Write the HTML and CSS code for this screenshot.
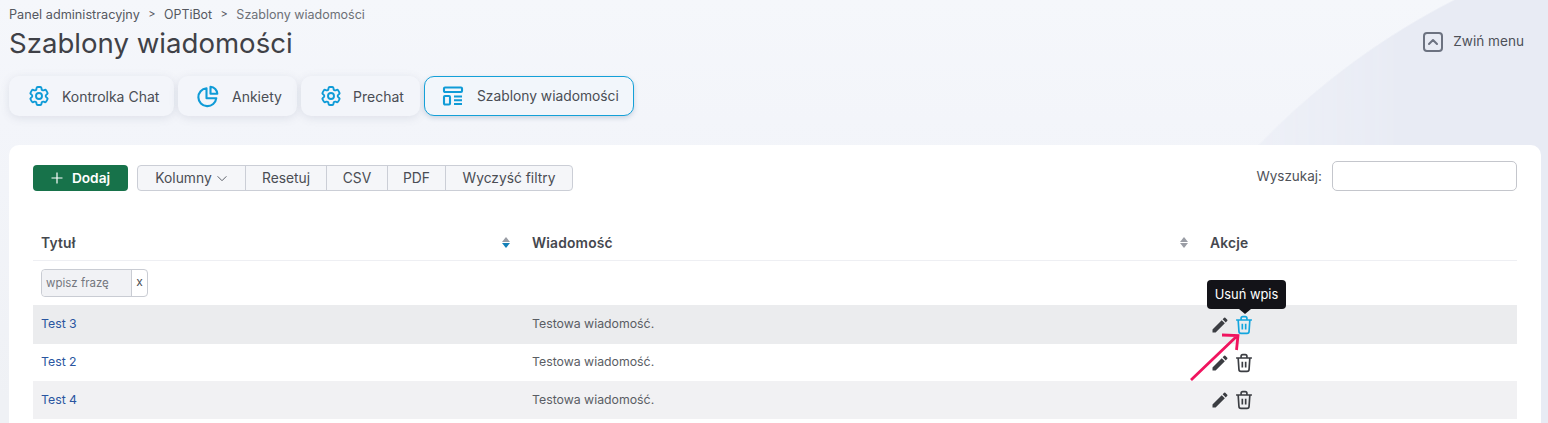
FILE: index.html
```html
<!DOCTYPE html>
<html lang="pl">
<head>
<meta charset="utf-8">
<title>Szablony wiadomości</title>
<link rel="stylesheet" href="styles.css">
</head>
<body>
<header class="head">
  <div class="head-left">
    <nav class="crumbs"><span>Panel administracyjny</span><span class="sep">&gt;</span><span class="crumb-mid">OPTiBot</span><span class="sep">&gt;</span><span>Szablony wiadomości</span></nav>
    <h1 class="title">Szablony wiadomości</h1>
  </div>
  <div class="collapse">
    <svg class="collapse-ic" viewBox="0 0 20 20" width="20" height="20"><rect x="1" y="1" width="18" height="18" rx="3" fill="none" stroke="#6c7280" stroke-width="2"/><path d="M6 12l4-4 4 4" fill="none" stroke="#6c7280" stroke-width="2" stroke-linecap="round" stroke-linejoin="round"/></svg>
    <span>Zwiń menu</span>
  </div>
</header>
<div class="tabs">
  <a class="tab tab-1"><svg class="tab-ic" viewBox="0 0 24 24" width="24" height="24"><path d="M9.594 3.94c.09-.542.56-.94 1.11-.94h2.593c.55 0 1.02.398 1.11.94l.213 1.281c.063.374.313.686.645.87.074.04.147.083.22.127.325.196.72.257 1.075.124l1.217-.456a1.125 1.125 0 0 1 1.37.49l1.296 2.247a1.125 1.125 0 0 1-.26 1.431l-1.003.827c-.293.241-.438.613-.43.992a7.723 7.723 0 0 1 0 .255c-.008.378.137.75.43.991l1.004.827c.424.35.534.955.26 1.43l-1.298 2.247a1.125 1.125 0 0 1-1.369.491l-1.217-.456c-.355-.133-.75-.072-1.076.124a6.47 6.47 0 0 1-.22.128c-.331.183-.581.495-.644.869l-.213 1.281c-.09.543-.56.94-1.11.94h-2.594c-.55 0-1.019-.398-1.11-.94l-.213-1.281c-.062-.374-.312-.686-.644-.87a6.52 6.52 0 0 1-.22-.127c-.325-.196-.72-.257-1.076-.124l-1.217.456a1.125 1.125 0 0 1-1.369-.49l-1.297-2.247a1.125 1.125 0 0 1 .26-1.431l1.004-.827c.292-.24.437-.613.43-.991a6.932 6.932 0 0 1 0-.255c.007-.38-.138-.751-.43-.992l-1.004-.827a1.125 1.125 0 0 1-.26-1.43l1.297-2.247a1.125 1.125 0 0 1 1.37-.491l1.216.456c.356.133.751.072 1.076-.124.072-.044.146-.086.22-.128.332-.183.582-.495.644-.869l.214-1.28Z" fill="none" stroke="#0f9bd7" stroke-width="1.9" stroke-linejoin="round"/><circle cx="12" cy="12" r="3" fill="none" stroke="#0f9bd7" stroke-width="1.9"/></svg><span>Kontrolka Chat</span></a>
  <a class="tab tab-2"><svg class="tab-ic" viewBox="0 0 24 24" width="24" height="24"><path d="M10.5 4.2a9 9 0 1 0 9.8 10h-9.8z" fill="none" stroke="#0f9bd7" stroke-width="2.1" stroke-linejoin="round"/><path d="M14.5 2.8a7.2 7.2 0 0 1 6.8 7h-6.8z" fill="none" stroke="#0f9bd7" stroke-width="2.1" stroke-linejoin="round"/></svg><span>Ankiety</span></a>
  <a class="tab tab-3"><svg class="tab-ic" viewBox="0 0 24 24" width="24" height="24"><path d="M9.594 3.94c.09-.542.56-.94 1.11-.94h2.593c.55 0 1.02.398 1.11.94l.213 1.281c.063.374.313.686.645.87.074.04.147.083.22.127.325.196.72.257 1.075.124l1.217-.456a1.125 1.125 0 0 1 1.37.49l1.296 2.247a1.125 1.125 0 0 1-.26 1.431l-1.003.827c-.293.241-.438.613-.43.992a7.723 7.723 0 0 1 0 .255c-.008.378.137.75.43.991l1.004.827c.424.35.534.955.26 1.43l-1.298 2.247a1.125 1.125 0 0 1-1.369.491l-1.217-.456c-.355-.133-.75-.072-1.076.124a6.47 6.47 0 0 1-.22.128c-.331.183-.581.495-.644.869l-.213 1.281c-.09.543-.56.94-1.11.94h-2.594c-.55 0-1.019-.398-1.11-.94l-.213-1.281c-.062-.374-.312-.686-.644-.87a6.52 6.52 0 0 1-.22-.127c-.325-.196-.72-.257-1.076-.124l-1.217.456a1.125 1.125 0 0 1-1.369-.49l-1.297-2.247a1.125 1.125 0 0 1 .26-1.431l1.004-.827c.292-.24.437-.613.43-.991a6.932 6.932 0 0 1 0-.255c.007-.38-.138-.751-.43-.992l-1.004-.827a1.125 1.125 0 0 1-.26-1.43l1.297-2.247a1.125 1.125 0 0 1 1.37-.491l1.216.456c.356.133.751.072 1.076-.124.072-.044.146-.086.22-.128.332-.183.582-.495.644-.869l.214-1.28Z" fill="none" stroke="#0f9bd7" stroke-width="1.9" stroke-linejoin="round"/><circle cx="12" cy="12" r="3" fill="none" stroke="#0f9bd7" stroke-width="1.9"/></svg><span>Prechat</span></a>
  <a class="tab tab-active"><svg class="tab-ic" viewBox="0 0 24 24" width="24" height="24"><rect x="3" y="3.5" width="18" height="4.5" rx="1" fill="none" stroke="#0f9bd7" stroke-width="2.1"/><rect x="3" y="12" width="6" height="8.5" rx="1" fill="none" stroke="#0f9bd7" stroke-width="2.1"/><path d="M13 12.5h8M13 16.3h8M13 20h8" stroke="#0f9bd7" stroke-width="2.1"/></svg><span>Szablony wiadomości</span></a>
</div>
<main class="card">
  <div class="toolbar">
    <button class="add"><svg viewBox="0 0 12 12" width="12" height="12"><path d="M6 .5v11M.5 6h11" stroke="#fff" stroke-width="1.2"/></svg><span>Dodaj</span></button>
    <div class="btn-group">
      <button class="gbtn gbtn-cols">Kolumny <svg viewBox="0 0 12 8" width="12" height="7"><path d="M1 1.5l5 5 5-5" fill="none" stroke="#555a63" stroke-width="1.1"/></svg></button>
      <button class="gbtn gbtn-reset">Resetuj</button>
      <button class="gbtn gbtn-csv">CSV</button>
      <button class="gbtn gbtn-pdf">PDF</button>
      <button class="gbtn gbtn-clear">Wyczyść filtry</button>
    </div>
    <label class="search"><span>Wyszukaj:</span><input class="search-in" type="text"></label>
  </div>
  <table class="grid">
    <colgroup><col class="c1"><col class="c2"><col class="c3"></colgroup>
    <thead>
      <tr class="hrow">
        <th><div class="th-in">Tytuł<span class="sort"><i class="up"></i><i class="down on"></i></span></div></th>
        <th><div class="th-in">Wiadomość<span class="sort"><i class="up"></i><i class="down"></i></span></div></th>
        <th>Akcje</th>
      </tr>
      <tr class="frow">
        <td><div class="filter"><input class="filter-in" type="text" placeholder="wpisz frazę"><span class="filter-x">x</span></div></td>
        <td></td><td></td>
      </tr>
    </thead>
    <tbody>
      <tr class="row hover">
        <td><a class="link">Test 3</a></td><td>Testowa wiadomość.</td>
        <td class="act-cell"><div class="acts">
          <svg viewBox="0 0 24 24" width="20" height="20"><path d="M3 17.25V21h3.75L17.81 9.94l-3.75-3.75zM20.71 7.04a1 1 0 0 0 0-1.41l-2.34-2.34a1 1 0 0 0-1.41 0l-1.83 1.83 3.75 3.75z" fill="#3b3d42"/></svg>
          <svg viewBox="0 0 24 24" width="20" height="20"><path d="M2.5 6h19M8.5 6V4a2 2 0 0 1 2-2h3a2 2 0 0 1 2 2v2M5 6l.9 13.5A2.5 2.5 0 0 0 8.4 22h7.2a2.5 2.5 0 0 0 2.5-2.5L19 6M10 10.5v7M14 10.5v7" fill="none" stroke="#12a5de" stroke-width="2"/></svg>
        </div></td>
      </tr>
      <tr class="row">
        <td><a class="link">Test 2</a></td><td>Testowa wiadomość.</td>
        <td class="act-cell"><div class="acts">
          <svg viewBox="0 0 24 24" width="20" height="20"><path d="M3 17.25V21h3.75L17.81 9.94l-3.75-3.75zM20.71 7.04a1 1 0 0 0 0-1.41l-2.34-2.34a1 1 0 0 0-1.41 0l-1.83 1.83 3.75 3.75z" fill="#3b3d42"/></svg>
          <svg viewBox="0 0 24 24" width="20" height="20"><path d="M2.5 6h19M8.5 6V4a2 2 0 0 1 2-2h3a2 2 0 0 1 2 2v2M5 6l.9 13.5A2.5 2.5 0 0 0 8.4 22h7.2a2.5 2.5 0 0 0 2.5-2.5L19 6M10 10.5v7M14 10.5v7" fill="none" stroke="#3b3d42" stroke-width="2"/></svg>
        </div></td>
      </tr>
      <tr class="row odd">
        <td><a class="link">Test 4</a></td><td>Testowa wiadomość.</td>
        <td class="act-cell"><div class="acts">
          <svg viewBox="0 0 24 24" width="20" height="20"><path d="M3 17.25V21h3.75L17.81 9.94l-3.75-3.75zM20.71 7.04a1 1 0 0 0 0-1.41l-2.34-2.34a1 1 0 0 0-1.41 0l-1.83 1.83 3.75 3.75z" fill="#3b3d42"/></svg>
          <svg viewBox="0 0 24 24" width="20" height="20"><path d="M2.5 6h19M8.5 6V4a2 2 0 0 1 2-2h3a2 2 0 0 1 2 2v2M5 6l.9 13.5A2.5 2.5 0 0 0 8.4 22h7.2a2.5 2.5 0 0 0 2.5-2.5L19 6M10 10.5v7M14 10.5v7" fill="none" stroke="#3b3d42" stroke-width="2"/></svg>
        </div></td>
      </tr>
    </tbody>
  </table>
</main>
<div class="tooltip">Usuń wpis</div>
<svg class="arrow" viewBox="0 0 60 60" width="60" height="60"><path d="M3 55L49 11M34 10L50 10.5L48.5 25" fill="none" stroke="#f0145f" stroke-width="2.8"/></svg>
</body>
</html>
```
FILE: styles.css
```css
* { box-sizing: border-box; }
html { height: 100%; overflow: hidden; }
body {
  margin: 0;
  height: 423px;
  overflow: hidden;
  position: relative;
  background: linear-gradient(180deg, #f5f7fb 0, #f3f5fa 120px, #eff1f5 400px);
  font-family: Inter, "Liberation Sans", sans-serif;
  color: #45474e;
}
body::before {
  content: "";
  position: absolute;
  inset: 0;
  z-index: -1;
  background: radial-gradient(circle 735px at 1788px 654px, #e8ebf4 99.8%, transparent 100%);
  -webkit-mask-image: linear-gradient(to right, rgba(0, 0, 0, .5) 1260px, #000 1400px);
  mask-image: linear-gradient(to right, rgba(0, 0, 0, .5) 1260px, #000 1400px);
}
.head {
  display: flex;
  justify-content: space-between;
  padding: 7px 24px 0 9px;
  height: 76px;
}
.crumbs {
  display: flex;
  gap: 8.5px;
  font-size: 12.7px;
  line-height: 15px;
  color: #55585f;
}
.crumbs span:last-child { color: #6d7077; font-size: 12.5px; }
.crumbs .crumb-mid { font-size: 12.4px; }
.crumbs .sep { font-size: 11px; }
.title {
  margin: 3px 0 0;
  font-size: 27.6px;
  line-height: 36px;
  font-weight: 400;
  color: #3f4147;
}
.collapse {
  display: flex;
  align-items: center;
  gap: 10px;
  height: 20px;
  margin-top: 25px;
  font-size: 13.6px;
  color: #4d5058;
}
.collapse span { position: relative; top: -1px; }
.tabs {
  display: flex;
  gap: 4px;
  padding-left: 9px;
  height: 40px;
}
.tab {
  display: flex;
  align-items: center;
  gap: 11px;
  height: 40px;
  padding: 0 18px;
  font-size: 14px;
  white-space: nowrap;
  color: #4a4d54;
  background: #f3f5fa;
  border-radius: 10px;
  box-shadow: 0 2px 10px rgba(90, 100, 130, .14);
}
.tab-ic { flex: none; }
.tab-1 { width: 165px; }
.tab-2 { width: 119px; padding-left: 18px; gap: 12px; }
.tab-3 { width: 119px; gap: 10px; }
.tab-active {
  width: 210px;
  padding: 0 14px 0 16px;
  gap: 12px;
  font-size: 13.8px;
  background: #f2f6fb;
  border: 1px solid #14a0d8;
  box-shadow: 0 2px 5px rgba(60, 90, 130, .22);
}
.card {
  margin: 29px 7px 0 9px;
  height: 278px;
  padding: 16px 24px 0;
  background: #fff;
  border-radius: 10px 10px 0 0;
}
.toolbar {
  display: flex;
  align-items: flex-end;
  height: 30px;
}
.add {
  display: flex;
  align-items: center;
  justify-content: center;
  gap: 9px;
  width: 95px;
  height: 26px;
  border: 0;
  border-radius: 4px;
  background: #17724a;
  color: #fff;
  font: 600 13.7px Inter, "Liberation Sans", sans-serif;
}
.btn-group {
  display: flex;
  height: 26px;
  margin-left: 9px;
  border: 1px solid #cbced6;
  border-radius: 4px;
  background: #f5f6f9;
}
.gbtn {
  display: flex;
  align-items: center;
  justify-content: center;
  gap: 4px;
  padding: 0;
  border: 0;
  border-right: 1px solid #cbced6;
  background: transparent;
  color: #4a4d54;
  font: 400 13.8px Inter, "Liberation Sans", sans-serif;
  white-space: nowrap;
}
.gbtn-cols { width: 108px; }
.gbtn-reset { width: 81px; }
.gbtn-csv { width: 61px; }
.gbtn-pdf { width: 58px; }
.gbtn-clear { width: 126px; border-right: 0; }
.search {
  display: flex;
  align-items: center;
  gap: 10px;
  margin-left: auto;
  font-size: 13.5px;
  color: #4f5259;
}
.search-in {
  width: 185px;
  height: 30px;
  border: 1px solid #c4c6cc;
  border-radius: 5px;
  background: #fff;
}
.grid {
  width: 1484px;
  margin-top: 30px;
  table-layout: fixed;
  border-collapse: collapse;
  font-size: 12.3px;
}
.c1 { width: 491px; }
.c2 { width: 678px; }
.grid th {
  height: 39px;
  padding: 5px 8px 0;
  text-align: left;
  font-size: 13.8px;
  font-weight: 600;
  letter-spacing: .2px;
  color: #45474e;
}
.hrow { border-bottom: 1px solid #eeeff3; }
.th-in {
  display: flex;
  align-items: center;
  justify-content: space-between;
}
.sort {
  display: flex;
  flex-direction: column;
  gap: 1px;
  margin-right: 6px;
}
.sort i {
  display: block;
  width: 0;
  height: 0;
  border-left: 4px solid transparent;
  border-right: 4px solid transparent;
}
.sort .up { border-bottom: 5px solid #9a9da5; }
.sort .down { border-top: 5px solid #9a9da5; }
.sort .down.on { border-top-color: #1480b8; }
.frow td { height: 45px; padding: 1px 8px 0; }
.filter {
  display: flex;
  width: 107px;
  height: 28px;
  border: 1px solid #c9ccd3;
  border-radius: 4px;
  background: #fff;
}
.filter-in {
  width: 90px;
  min-width: 0;
  padding: 0 4px;
  border: 0;
  border-right: 1px solid #c9ccd3;
  border-radius: 4px 0 0 4px;
  background: #f1f2f5;
  font: 11.5px Inter, "Liberation Sans", sans-serif;
}
.filter-in::placeholder { color: #74777e; opacity: 1; }
.filter-x {
  flex: 1;
  text-align: center;
  line-height: 24px;
  font-size: 12px;
  color: #4a4d54;
}
.row td { height: 37px; padding: 0 8px 3px; color: #5a5d64; }
.row td.act-cell { padding: 0 8px; }
.row.hover { background: #ebecee; }
.row.hover td { height: 39px; }
.row.odd { background: #f1f1f3; }
.row.odd td { height: 38px; padding-bottom: 1px; }
.row .link { color: #2a55a0; }
.acts {
  display: flex;
  align-items: center;
  gap: 4px;
}
.tooltip {
  position: absolute;
  left: 1207px;
  top: 280px;
  width: 79px;
  height: 29px;
  border-radius: 4px;
  background: #131318;
  color: #fff;
  font-size: 12.9px;
  line-height: 29px;
  text-align: center;
}
.tooltip::after {
  content: "";
  position: absolute;
  left: 32px;
  top: 29px;
  border-left: 6px solid transparent;
  border-right: 6px solid transparent;
  border-top: 5px solid #131318;
}
.arrow {
  position: absolute;
  left: 1188px;
  top: 325px;
}
```
